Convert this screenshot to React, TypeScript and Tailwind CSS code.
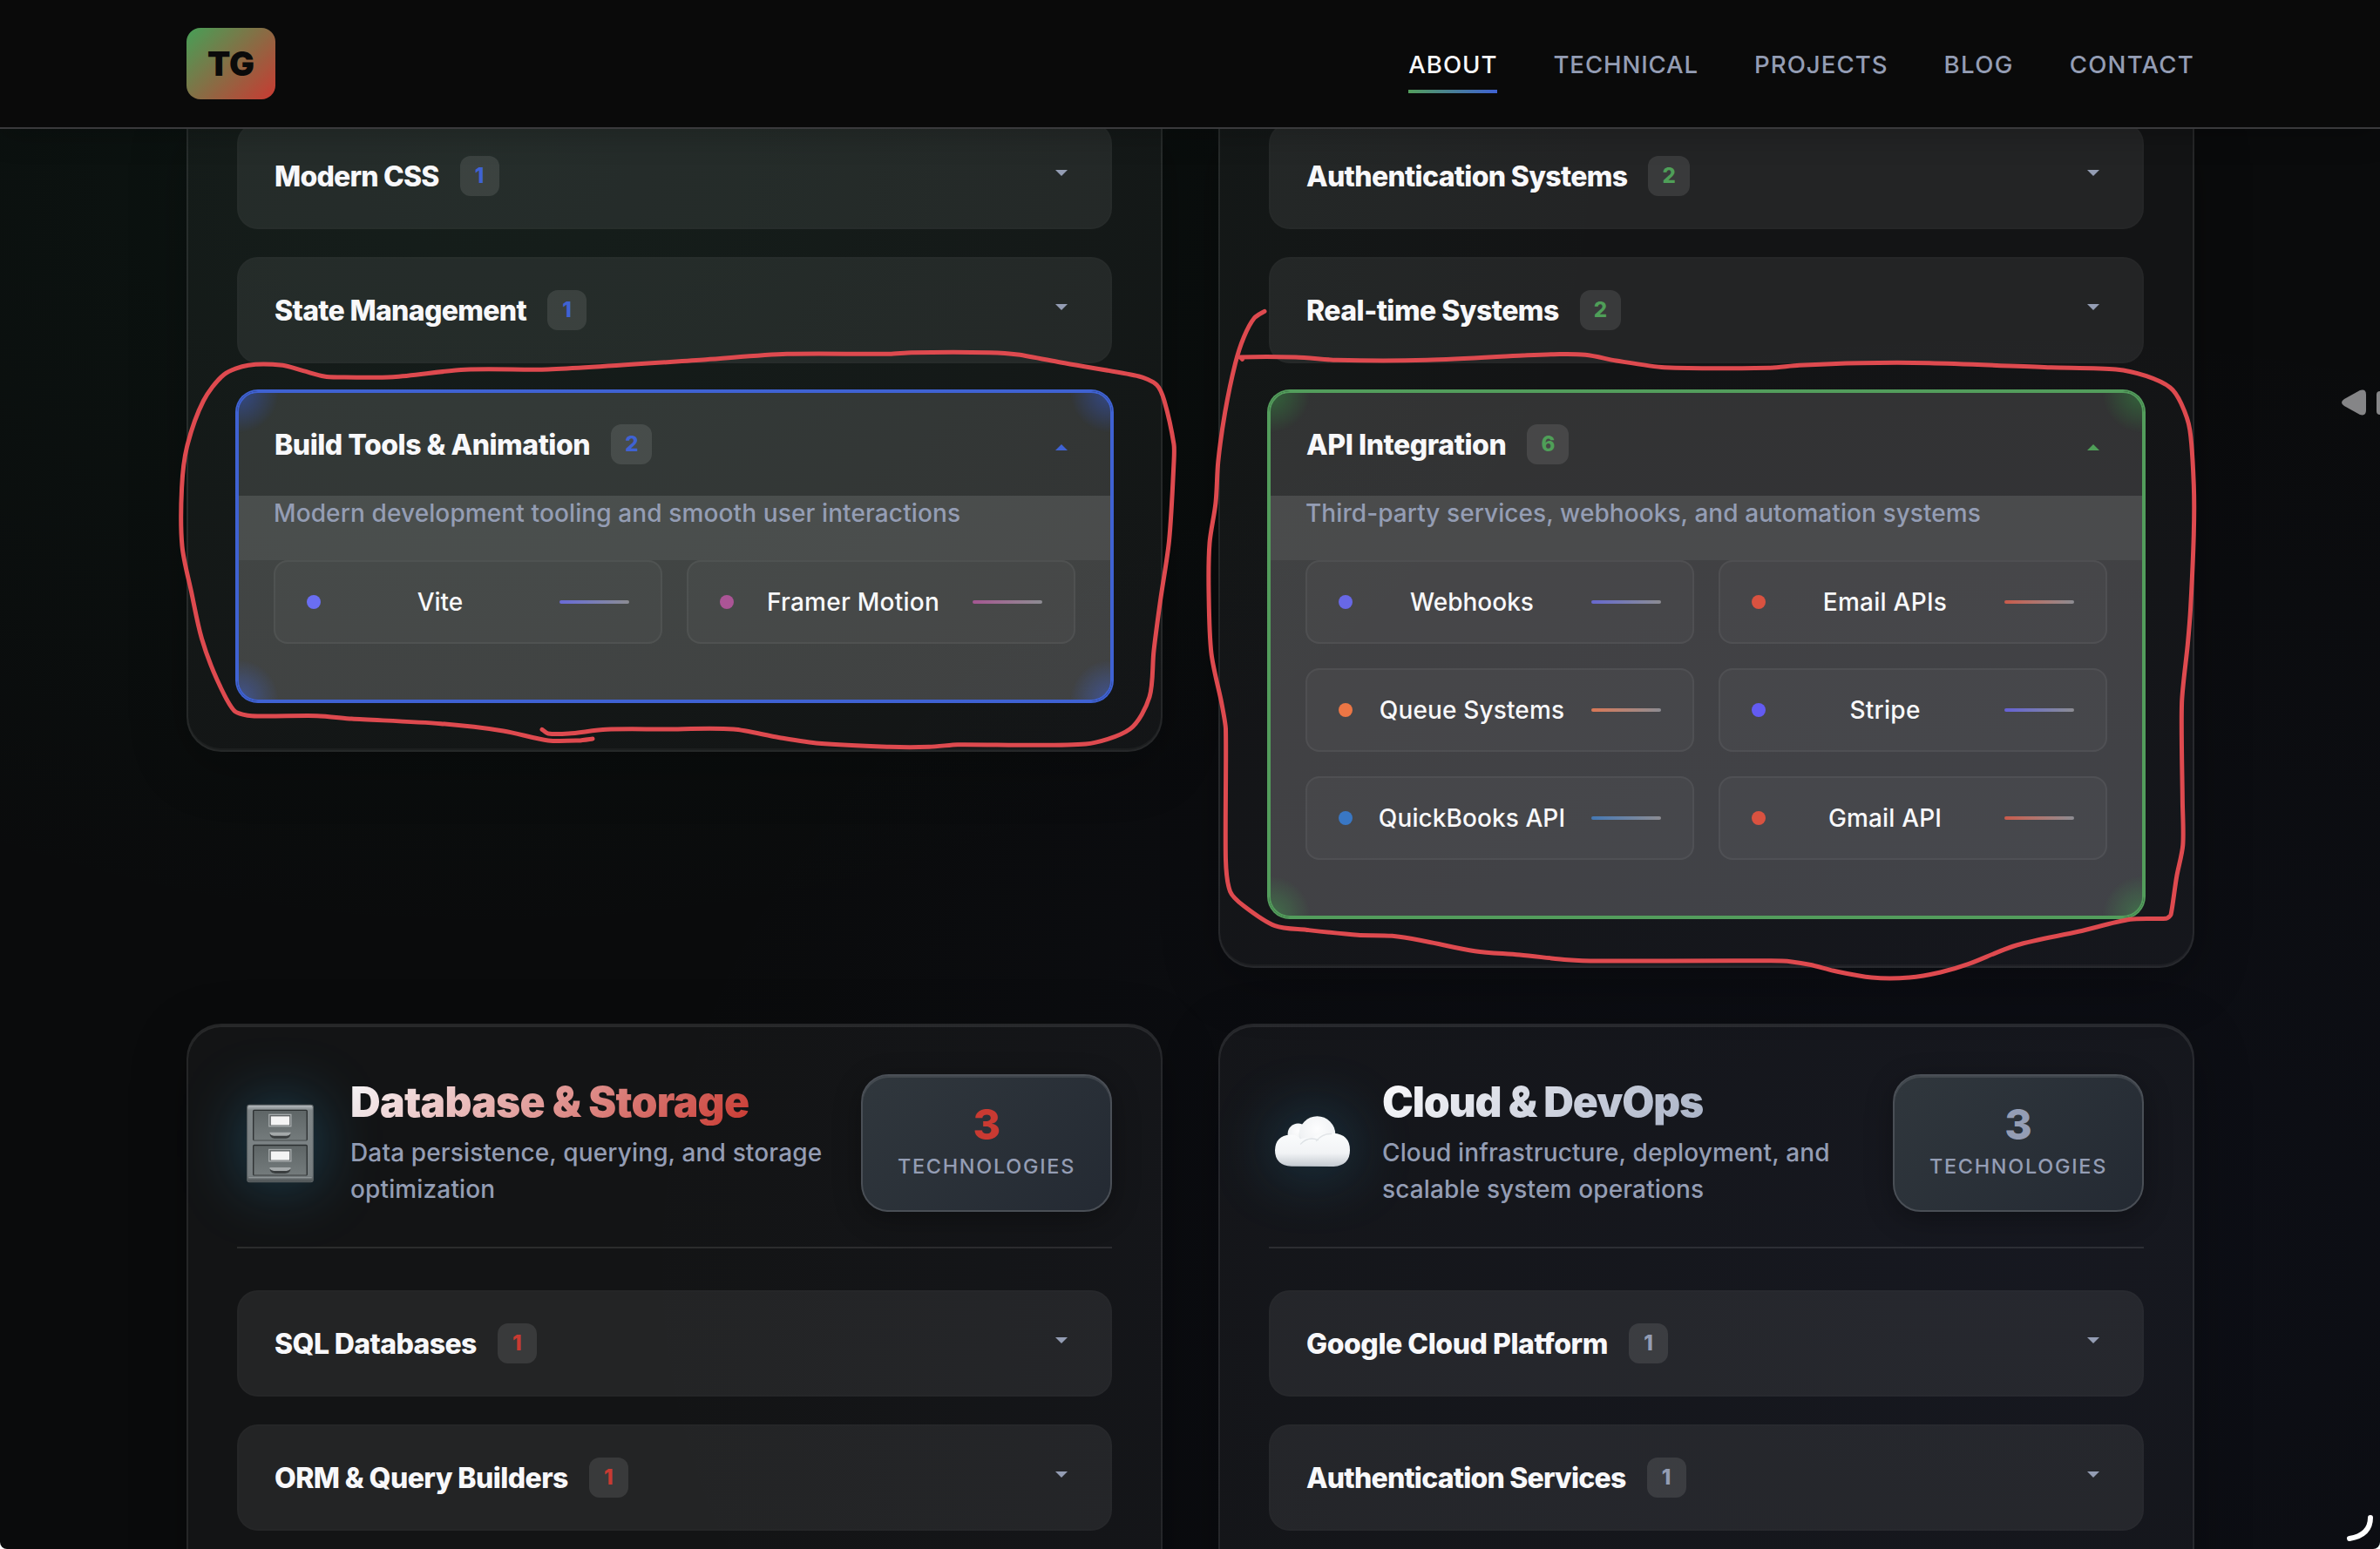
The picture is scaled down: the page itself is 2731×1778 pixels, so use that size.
import type { ReactNode } from "react";

type Accent = "blue" | "green" | "red" | "slate";

const accentText: Record<Accent, string> = {
  blue: "text-[#3f62d3]",
  green: "text-[#4f9f58]",
  red: "text-[#c93a32]",
  slate: "text-[#949db4]",
};

const accentBorder: Record<Accent, string> = {
  blue: "border-[#3f62d3] shadow-[0_0_0_2px_#3f62d3]",
  green: "border-[#539d5c] shadow-[0_0_0_2px_#539d5c]",
  red: "border-[#c93a32] shadow-[0_0_0_2px_#c93a32]",
  slate: "border-[#949db4] shadow-[0_0_0_2px_#949db4]",
};

const cornerGlow: Record<Accent, string> = {
  blue: "bg-[radial-gradient(circle_46px_at_0_0,rgba(52,92,220,0.5),transparent),radial-gradient(circle_46px_at_100%_0,rgba(52,92,220,0.5),transparent),radial-gradient(circle_46px_at_0_100%,rgba(52,92,220,0.5),transparent),radial-gradient(circle_46px_at_100%_100%,rgba(52,92,220,0.5),transparent)]",
  green:
    "bg-[radial-gradient(circle_46px_at_0_0,rgba(52,150,66,0.5),transparent),radial-gradient(circle_46px_at_100%_0,rgba(52,150,66,0.5),transparent),radial-gradient(circle_46px_at_0_100%,rgba(52,150,66,0.5),transparent),radial-gradient(circle_46px_at_100%_100%,rgba(52,150,66,0.5),transparent)]",
  red: "",
  slate: "",
};

function NavLink({ label, tracking, active }: { label: string; tracking: string; active?: boolean }) {
  return (
    <a className={`relative text-[27.6px] leading-[44px] font-medium ${tracking} ${active ? "text-[#f8f8fa]" : "text-[#949db4]"}`}>
      {label}
      {active && <span className="absolute inset-x-0 -bottom-[11px] h-1 bg-[linear-gradient(90deg,#539d5c,#3f62d3)]" />}
    </a>
  );
}

function RowHeader({ title, tracking, count, accent, open }: { title: string; tracking: string; count: number; accent: Accent; open?: boolean }) {
  return (
    <div className="flex h-[118px] items-center justify-between pr-10 pl-[41px]">
      <div className="flex items-center gap-6">
        <h3 className={`pt-px text-[32px] leading-[46px] font-extrabold whitespace-nowrap text-[#f8f8fa] ${tracking}`}>{title}</h3>
        <span className={`min-w-[45px] rounded-xl bg-white/10 px-4 text-center text-[24px] leading-[46px] font-extrabold ${accentText[accent]}`}>{count}</span>
      </div>
      <span className="flex w-8 justify-center">
        {open ? (
          <svg className={`mt-[7px] h-[7px] w-[14px] ${accentText[accent]}`} viewBox="0 0 14 7" fill="currentColor">
            <path d="M0 7 7 0l7 7z" />
          </svg>
        ) : (
          <svg className="-mt-[7px] h-[7px] w-[14px] text-[#949db4]" viewBox="0 0 14 7" fill="currentColor">
            <path d="M0 0h14L7 7z" />
          </svg>
        )}
      </span>
    </div>
  );
}

function Row(props: { title: string; tracking: string; count: number; accent: Accent }) {
  return (
    <div className="rounded-3xl border-2 border-white/1 bg-white/7">
      <RowHeader {...props} />
    </div>
  );
}

function Tech({ name, dot, bar, tracking }: { name: string; dot: string; bar: string; tracking: string }) {
  return (
    <div className="flex h-24 items-center justify-between rounded-2xl border-2 border-white/5 bg-white/3 px-9">
      <span className={`size-4 rounded-full ${dot}`} />
      <span className={`text-[28px] leading-10 font-medium whitespace-nowrap text-[#f8f8fa] ${tracking}`}>{name}</span>
      <span className={`h-1 w-20 rounded-sm bg-linear-to-r to-[#8c8c92] ${bar}`} />
    </div>
  );
}

function OpenRow({ title, tracking, count, accent, description, descTracking, children }: {
  title: string; tracking: string; count: number; accent: Accent; description: string; descTracking: string; children: ReactNode;
}) {
  return (
    <div className={`relative rounded-3xl border-2 bg-white/13 ${accentBorder[accent]}`}>
      <div className={`absolute inset-0 rounded-[22px] ${cornerGlow[accent]}`} />
      <div className="relative">
        <RowHeader title={title} tracking={tracking} count={count} accent={accent} open />
        <div className="rounded-b-[22px] bg-white/7 pb-16">
          <p className={`h-[74px] bg-white/5 px-10 text-[28px] leading-[41px] font-medium whitespace-nowrap text-[#949db4] ${descTracking}`}>{description}</p>
          <div className="grid grid-cols-2 gap-7 px-10">{children}</div>
        </div>
      </div>
    </div>
  );
}

function TopCard({ children }: { children: ReactNode }) {
  return (
    <section className="flex flex-col gap-8 rounded-b-[40px] border-x-2 border-b-2 border-white/8 bg-white/4 px-14 pb-14 shadow-[0_16px_64px_rgba(0,0,0,0.25),inset_0_-2px_0_rgba(255,255,255,0.04)]">
      {children}
    </section>
  );
}

function CategoryCard({ icon, title, titleClass, description, accent, children }: {
  icon: ReactNode; title: string; titleClass: string; description: [string, string]; accent: Accent; children: ReactNode;
}) {
  return (
    <section className="h-[700px] rounded-[40px] border-2 border-white/8 bg-white/4 p-14 shadow-[0_16px_64px_rgba(0,0,0,0.25),inset_0_2px_0_rgba(255,255,255,0.09)]">
      <div className="flex items-center border-b-2 border-white/10 pb-10">
        <div className="flex w-[98px] shrink-0 justify-center">{icon}</div>
        <div className="ml-8 grow">
          <h2 className={`mt-[-1px] mb-[10px] w-fit bg-clip-text text-[48px] leading-[54px] font-black whitespace-nowrap text-transparent ${titleClass}`}>{title}</h2>
          <p className="text-[28px] leading-[42px] font-medium tracking-[0.005em] whitespace-nowrap text-[#949db4]">
            {description[0]}
            <br />
            {description[1]}
          </p>
        </div>
        <div className="flex h-[158px] w-72 shrink-0 flex-col items-center rounded-[32px] border-2 border-[#4a4f56] bg-[linear-gradient(135deg,#30373d,#242a33)] pt-8 shadow-[0_8px_32px_rgba(0,0,0,0.3),inset_0_2px_0_rgba(255,255,255,0.1)]">
          <span className={`text-[48px] leading-[48px] font-extrabold ${accentText[accent]}`}>3</span>
          <span className="mt-[6px] text-[23.4px] leading-9 font-medium tracking-[0.075em] text-[#949db4]">TECHNOLOGIES</span>
        </div>
      </div>
      <div className="mt-12 flex flex-col gap-8">{children}</div>
    </section>
  );
}

function Drawer({ y }: { y: number }) {
  return (
    <g transform={`translate(0 ${y})`}>
      <rect x="115" y="0" width="184" height="103" rx="3" fill="url(#drawer)" stroke="#2c3031" strokeWidth="4" />
      <path d="M117 103h180" stroke="#8c9293" strokeWidth="2" />
      <rect x="169" y="15" width="75" height="40" fill="#5c6162" stroke="#a5aaab" strokeWidth="4" />
      <rect x="175" y="21" width="64" height="30" fill="#f4f4f4" />
      <path d="M172 78h70v6c0 8-10 13-18 13h-34c-8 0-18-5-18-13z" fill="#3a3e3f" />
      <path d="M171 76h72v4q-4 8-14 8h-44q-10 0-14-8z" fill="#a4a9aa" />
    </g>
  );
}

function CabinetIcon() {
  return (
    <svg className="h-[89px] w-[77px] overflow-visible drop-shadow-[0_0_36px_rgba(40,130,175,0.45)]" viewBox="92 84 230 266">
      <defs>
        <linearGradient id="drawer" x1="0" y1="0" x2="0" y2="1">
          <stop offset="0" stopColor="#5e6566" />
          <stop offset="1" stopColor="#747b7c" />
        </linearGradient>
        <linearGradient id="frame" x1="0" y1="0" x2="0" y2="1">
          <stop offset="0" stopColor="#b9bec2" />
          <stop offset="0.07" stopColor="#7f8688" />
          <stop offset="0.92" stopColor="#777e80" />
          <stop offset="1" stopColor="#4b5052" />
        </linearGradient>
      </defs>
      <rect x="94" y="85" width="226" height="264" rx="8" fill="url(#frame)" stroke="#5d6365" strokeWidth="3" />
      <path d="M99 334h216" stroke="#9aa0a2" strokeWidth="3" />
      <Drawer y={103} />
      <Drawer y={223} />
    </svg>
  );
}

function CloudIcon() {
  return (
    <svg className="-mt-1 ml-[2px] h-[59px] w-[86px] overflow-visible drop-shadow-[0_0_36px_rgba(40,130,175,0.45)]" viewBox="68 93 259 176">
      <defs>
        <linearGradient id="puff" x1="0" y1="0" x2="0" y2="1">
          <stop offset="0" stopColor="#fbfcfd" />
          <stop offset="0.6" stopColor="#f1f3f5" />
          <stop offset="1" stopColor="#c3c9d0" />
        </linearGradient>
        <radialGradient id="puffTop" cx="0.5" cy="0.35" r="0.65">
          <stop offset="0" stopColor="#fdfdfe" />
          <stop offset="0.75" stopColor="#f0f2f4" />
          <stop offset="1" stopColor="#cfd5da" />
        </radialGradient>
      </defs>
      <circle cx="148" cy="154" r="36" fill="url(#puffTop)" />
      <circle cx="214" cy="156" r="63" fill="url(#puffTop)" />
      <path d="M120 157q22-2 36 14 18-4 40-3 20-16 74-16 57 4 57 58 0 52-56 57l-146-1q-57-4-57-56 2-50 52-53z" fill="url(#puff)" />
      <path d="M157 189q26-28 60-14" fill="none" stroke="#dde1e5" strokeWidth="4" strokeLinecap="round" />
      <path d="M211 178q22-26 52-24" fill="none" stroke="#e2e5e8" strokeWidth="4" strokeLinecap="round" />
    </svg>
  );
}

type Point = [number, number];

/** Smooth open curve that passes through every point. */
function smooth(points: Point[]) {
  let d = `M${points[0][0]} ${points[0][1]}`;
  for (let i = 0; i < points.length - 1; i++) {
    const p0 = points[Math.max(i - 1, 0)];
    const p1 = points[i];
    const p2 = points[i + 1];
    const p3 = points[Math.min(i + 2, points.length - 1)];
    const len = Math.hypot(p2[0] - p1[0], p2[1] - p1[1]);
    const a = Math.min(1, len / (Math.hypot(p1[0] - p0[0], p1[1] - p0[1]) || len));
    const b = Math.min(1, len / (Math.hypot(p3[0] - p2[0], p3[1] - p2[1]) || len));
    d += `C${p1[0] + ((p2[0] - p0[0]) / 6) * a} ${p1[1] + ((p2[1] - p0[1]) / 6) * a} ${p2[0] - ((p3[0] - p1[0]) / 6) * b} ${p2[1] - ((p3[1] - p1[1]) / 6) * b} ${p2[0]} ${p2[1]}`;
  }
  return d;
}

const leftLoop: Point[] = [
  [680, 848], [664, 850], [629, 850], [577.5, 839], [506, 830.7], [403.5, 825], [364, 821.7], [289, 821.7], [269, 816], [249, 780],
  [231.5, 733], [219.7, 680], [209, 626.7], [208.6, 560], [214.5, 513], [233.5, 460], [257, 430], [285, 419.3], [324.4, 419.3],
  [348, 425.7], [372, 432], [387.7, 433], [451, 432.7], [534, 424.3], [629, 424], [810, 412.7], [903, 406.3], [1021, 406.3],
  [1045.7, 404.7], [1135.5, 404.7], [1168, 407], [1217, 416], [1307, 432], [1327.3, 441.7], [1336, 460], [1347, 510], [1347, 530],
  [1341.6, 620], [1331.4, 690], [1324, 746.7], [1319, 800], [1296.7, 836.7], [1245.7, 854], [1098.8, 854.7], [1066, 857.3],
  [1021, 857.3], [939.6, 853.3], [894.7, 846.7], [841.6, 837], [760, 837], [696, 837.3], [652.6, 842], [629, 842], [622, 837.3],
];

const rightLoop: Point[] = [
  [1451, 357.3], [1439.3, 365], [1427.4, 386.7], [1417.6, 416.7], [1405.7, 473.3], [1397.8, 530], [1395, 576.7], [1388, 623.3],
  [1387, 680], [1390, 750], [1401.7, 806.7], [1406.5, 836.7], [1406.5, 986.7], [1411.6, 1023.3], [1427.4, 1040], [1463, 1062.7],
  [1498.6, 1067.3], [1558, 1073.3], [1597.5, 1074.3], [1637, 1080.7], [1692.4, 1091.7], [1743.8, 1096], [1799, 1101.7],
  [1834.7, 1103], [2045, 1103], [2076.5, 1107.3], [2104, 1114.3], [2147.7, 1122], [2191, 1122], [2226.8, 1116], [2258.4, 1106.7],
  [2313.8, 1085], [2385, 1069.3], [2444.3, 1055.3], [2485.8, 1054.3], [2491, 1050], [2497.6, 1006.7], [2504.8, 970], [2504.4, 920],
  [2503.6, 806.7], [2510.3, 740], [2513.5, 700], [2517.3, 613.3], [2517.3, 556.7], [2512.8, 493.3], [2502.9, 463.3], [2490.4, 445],
  [2463, 431.7], [2428, 424], [2353.4, 421.7], [2214, 416.7], [2134.3, 416.7], [2064.6, 419.3], [2029.7, 422.3], [1909.9, 421.7],
  [1854.5, 414], [1819, 407.3], [1783, 406.7], [1747.7, 408], [1637, 413.3], [1534, 413.3], [1486.8, 410], [1423.5, 410], [1425.5, 412.3],
];

export default function App() {
  return (
    <div className="relative h-[1778px] w-[2731px] overflow-hidden rounded-b-[8px] bg-[#0a0b0c] bg-[radial-gradient(ellipse_1300px_900px_at_560px_180px,rgba(40,150,90,0.075),transparent),radial-gradient(ellipse_1600px_1100px_at_2300px_1450px,rgba(70,85,210,0.055),transparent)] font-['Inter',sans-serif]">
      <header className="relative z-10 flex h-[148px] items-center justify-between border-b-2 border-[#3a3a3c] bg-[#0a0a0a] pr-[213px] pl-[214px] shadow-[0_8px_32px_rgba(0,0,0,0.2)]">
        <div className="flex h-[82px] w-[102px] items-center justify-center rounded-2xl bg-[linear-gradient(135deg,#46a057,#c93a32)]">
          <span className="text-[38.4px] leading-none font-black text-[#0a0a0a]">TG</span>
        </div>
        <nav className="flex gap-16 pt-px">
          <NavLink label="ABOUT" tracking="tracking-[0.036em]" active />
          <NavLink label="TECHNICAL" tracking="tracking-[0.032em]" />
          <NavLink label="PROJECTS" tracking="tracking-[0.037em]" />
          <NavLink label="BLOG" tracking="tracking-[0.050em]" />
          <NavLink label="CONTACT" tracking="tracking-[0.044em]" />
        </nav>
      </header>

      <main className="-mt-[7px] grid grid-cols-[1120px_1120px] items-start gap-16 pl-[214px]">
        <TopCard>
          <Row title="Modern CSS" tracking="tracking-[-0.0248em]" count={1} accent="blue" />
          <Row title="State Management" tracking="tracking-[-0.0209em]" count={1} accent="blue" />
          <OpenRow
            title="Build Tools & Animation"
            tracking="tracking-[-0.0149em]"
            count={2}
            accent="blue"
            description="Modern development tooling and smooth user interactions"
            descTracking="tracking-[0.0041em]"
          >
            <Tech name="Vite" dot="bg-[#6a6ef2]" bar="from-[#6a6ad8]" tracking="tracking-[0em]" />
            <Tech name="Framer Motion" dot="bg-[#ab5596]" bar="from-[#a45692]" tracking="tracking-[0.009em]" />
          </OpenRow>
        </TopCard>

        <TopCard>
          <Row title="Authentication Systems" tracking="tracking-[-0.0214em]" count={2} accent="green" />
          <Row title="Real-time Systems" tracking="tracking-[-0.0167em]" count={2} accent="green" />
          <OpenRow
            title="API Integration"
            tracking="tracking-[-0.0132em]"
            count={6}
            accent="green"
            description="Third-party services, webhooks, and automation systems"
            descTracking="tracking-[0.0026em]"
          >
            <Tech name="Webhooks" dot="bg-[#6868e6]" bar="from-[#6868ce]" tracking="tracking-[0em]" />
            <Tech name="Email APIs" dot="bg-[#d95240]" bar="from-[#c95a4b]" tracking="tracking-[0.009em]" />
            <Tech name="Queue Systems" dot="bg-[#ec7645]" bar="from-[#d97755]" tracking="tracking-[0.005em]" />
            <Tech name="Stripe" dot="bg-[#635bf2]" bar="from-[#6660d6]" tracking="tracking-[0.0095em]" />
            <Tech name="QuickBooks API" dot="bg-[#3977c4]" bar="from-[#4478b4]" tracking="tracking-[0.003em]" />
            <Tech name="Gmail API" dot="bg-[#d95240]" bar="from-[#c95a4b]" tracking="tracking-[0.006em]" />
          </OpenRow>
        </TopCard>

        <CategoryCard
          icon={<CabinetIcon />}
          title="Database & Storage"
          titleClass="bg-[linear-gradient(135deg,#f8f8fa,#c93a32)] tracking-[-0.0151em]"
          description={["Data persistence, querying, and storage", "optimization"]}
          accent="red"
        >
          <Row title="SQL Databases" tracking="tracking-[-0.0195em]" count={1} accent="red" />
          <Row title="ORM & Query Builders" tracking="tracking-[-0.0181em]" count={1} accent="red" />
        </CategoryCard>

        <CategoryCard
          icon={<CloudIcon />}
          title="Cloud & DevOps"
          titleClass="bg-[linear-gradient(135deg,#fbfafc,#a9b2c6)] tracking-[-0.0245em]"
          description={["Cloud infrastructure, deployment, and", "scalable system operations"]}
          accent="slate"
        >
          <Row title="Google Cloud Platform" tracking="tracking-[-0.0139em]" count={1} accent="slate" />
          <Row title="Authentication Services" tracking="tracking-[-0.0247em]" count={1} accent="slate" />
        </CategoryCard>
      </main>

      {/* Hand-drawn annotations and cursor marks lying over the page */}
      <svg className="pointer-events-none absolute inset-0 z-20 h-full w-full" viewBox="0 0 2731 1778" fill="none">
        <g stroke="#de4a4f" strokeWidth="5" strokeLinecap="round" strokeLinejoin="round">
          <path d={smooth(leftLoop)} />
          <path d={smooth(rightLoop)} />
        </g>
        <path d="M2690 458q-6 4 0 8l18 10q7 2 7-5v-18q0-7-7-5z" fill="#858587" />
        <rect x="2727" y="449" width="20" height="27" rx="4" fill="#858587" />
        <path d="M2720 1742q0 20-24 24" stroke="#fff" strokeWidth="6" strokeLinecap="round" />
      </svg>
    </div>
  );
}
